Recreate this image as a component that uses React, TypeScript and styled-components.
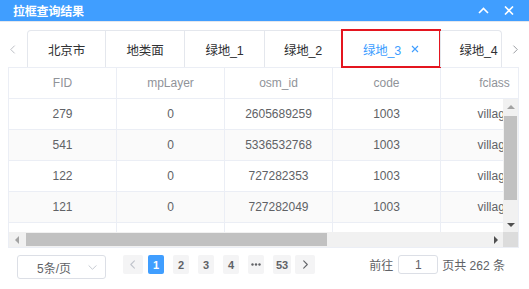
import React from "react";
import styled, { createGlobalStyle } from "styled-components";

const GlobalStyle = createGlobalStyle`
  html, body {
    margin: 0;
    background: #ffffff;
    font-family: "Liberation Sans", "Noto Sans CJK SC", sans-serif;
  }
  * { box-sizing: border-box; }
`;

const tabs = [
  { name: "北京市", width: 77 },
  { name: "地类面", width: 79 },
  { name: "绿地_1", width: 80 },
  { name: "绿地_2", width: 77 },
  { name: "绿地_3", width: 99 },
  { name: "绿地_4", width: 76 },
];
const activeTab = 4;

const columns = ["FID", "mpLayer", "osm_id", "code", "fclass"];
const rows = [
  ["279", "0", "2605689259", "1003", "village"],
  ["541", "0", "5336532768", "1003", "village"],
  ["122", "0", "727282353", "1003", "village"],
  ["121", "0", "727282049", "1003", "village"],
  ["120", "0", "727281977", "1003", "village"],
];

const Chevron = ({ dir, color, size = 8, width = 1.3 }: { dir: "up" | "down" | "left" | "right"; color: string; size?: number; width?: number }) => {
  const d = {
    up: "M1 6 L5 2 L9 6",
    down: "M1 3 L5 7 L9 3",
    left: "M6 1 L2 5 L6 9",
    right: "M3 1 L7 5 L3 9",
  }[dir];
  return (
    <svg width={size} height={size} viewBox="0 0 10 10">
      <path d={d} fill="none" stroke={color} strokeWidth={width} strokeLinecap="round" strokeLinejoin="round" />
    </svg>
  );
};

const Tri = ({ dir, color }: { dir: "up" | "down" | "left" | "right"; color: string }) => {
  const p = {
    up: "0,6 4,2 8,6",
    down: "0,2 4,6 8,2",
    left: "6,0 2,4 6,8",
    right: "2,0 6,4 2,8",
  }[dir];
  return (
    <svg width="8" height="8" viewBox="0 0 8 8">
      <polygon points={p} fill={color} />
    </svg>
  );
};

const App = () => {
  return (
    <Panel>
      <GlobalStyle />
      <TitleBar>
        <Title>拉框查询结果</Title>
        <TitleTools>
          <svg width="11" height="7" viewBox="0 0 11 7">
            <path d="M1 6 L5.5 1.5 L10 6" fill="none" stroke="#fff" strokeWidth="1.6" />
          </svg>
          <svg width="10" height="9" viewBox="0 0 10 9">
            <path d="M1 0.5 L9 8.5 M9 0.5 L1 8.5" fill="none" stroke="#fff" strokeWidth="1.6" />
          </svg>
        </TitleTools>
      </TitleBar>

      <TabsBar>
        <NavArrow>
          <Chevron dir="left" color="#b4b7bd" size={9} width={1} />
        </NavArrow>
        <TabNav>
          {tabs.map((t, i) => (
            <Tab key={t.name} $w={t.width} $active={i === activeTab} $first={i === 0}>
              {t.name}
              {i === activeTab && (
                <svg width="8" height="8" viewBox="0 0 8 8">
                  <path d="M1 1 L7 7 M7 1 L1 7" stroke="#409eff" strokeWidth="1.1" />
                </svg>
              )}
            </Tab>
          ))}
        </TabNav>
        <NavArrow>
          <Chevron dir="right" color="#909399" size={9} width={1} />
        </NavArrow>
      </TabsBar>

      <Table>
        <HeadRow>
          {columns.map((c) => (
            <HeadCell key={c}>{c}</HeadCell>
          ))}
        </HeadRow>
        <BodyGrid>
          <BodyView>
            {rows.map((r, ri) => (
              <Row key={ri} $striped={ri % 2 === 1}>
                {r.map((v, ci) => (
                  <Cell key={ci}>{v}</Cell>
                ))}
              </Row>
            ))}
          </BodyView>
          <VScroll>
            <ScrollBtn><Tri dir="up" color="#a3a3a3" /></ScrollBtn>
            <VTrack>
              <VThumb />
            </VTrack>
            <ScrollBtn><Tri dir="down" color="#505050" /></ScrollBtn>
          </VScroll>
          <HScroll>
            <ScrollBtn><Tri dir="left" color="#a3a3a3" /></ScrollBtn>
            <HTrack>
              <HThumb />
            </HTrack>
            <ScrollBtn><Tri dir="right" color="#505050" /></ScrollBtn>
          </HScroll>
          <Corner />
        </BodyGrid>
      </Table>

      <Pager>
        <SizeSelect>
          <span>5条/页</span>
          <Chevron dir="down" color="#c0c4cc" size={9} width={1} />
        </SizeSelect>
        <NavBtn>
          <Chevron dir="left" color="#c0c4cc" size={9} width={1.2} />
        </NavBtn>
        <Pages>
          <PageBtn $active>1</PageBtn>
          <PageBtn>2</PageBtn>
          <PageBtn>3</PageBtn>
          <PageBtn>4</PageBtn>
          <PageBtn>
            <svg width="10" height="3" viewBox="0 0 10 3">
              <circle cx="1.5" cy="1.5" r="1.2" fill="#606266" />
              <circle cx="5" cy="1.5" r="1.2" fill="#606266" />
              <circle cx="8.5" cy="1.5" r="1.2" fill="#606266" />
            </svg>
          </PageBtn>
          <PageBtn>53</PageBtn>
        </Pages>
        <NavBtn>
          <Chevron dir="right" color="#606266" size={9} width={1.2} />
        </NavBtn>
        <Jump>
          前往
          <JumpInput>1</JumpInput>
          页共 262 条
        </Jump>
      </Pager>
    </Panel>
  );
};

export default App;

const Panel = styled.div`
  width: 529px;
  height: 289px;
  background: #ffffff;
  overflow: hidden;
`;

const TitleBar = styled.div`
  height: 22px;
  background: #409eff;
  border-bottom: 1px solid #e4e7ed;
  display: flex;
  align-items: center;
  justify-content: space-between;
  padding: 0 15px 0 13px;
`;

const Title = styled.div`
  color: #ffffff;
  font-size: 12px;
  font-weight: bold;
  letter-spacing: -0.2px;
`;

const TitleTools = styled.div`
  display: flex;
  align-items: center;
  gap: 15px;
`;

const TabsBar = styled.div`
  margin-top: 8px;
  height: 37px;
  display: flex;
`;

const NavArrow = styled.div`
  width: 27px;
  flex-shrink: 0;
  display: flex;
  align-items: center;
  justify-content: center;
  padding-top: 1px;
`;

const TabNav = styled.div`
  flex: 1;
  min-width: 0;
  display: flex;
  border: 1px solid #e4e7ed;
  border-bottom: none;
  border-radius: 4px 4px 0 0;
  overflow-x: clip;
  overflow-y: visible;
`;

const Tab = styled.div<{ $w: number; $active?: boolean; $first?: boolean }>`
  position: relative;
  flex-shrink: 0;
  width: ${(p) => p.$w}px;
  display: flex;
  align-items: center;
  justify-content: center;
  gap: 10px;
  border-left: ${(p) => (p.$first ? "none" : "1px solid #e4e7ed")};
  font-size: 12.5px;
  letter-spacing: -0.2px;
  white-space: nowrap;
  color: ${(p) => (p.$active ? "#409eff" : "#303133")};
  &::after {
    content: "";
    display: ${(p) => (p.$active ? "block" : "none")};
    position: absolute;
    left: -1px;
    right: -1px;
    top: -2px;
    bottom: -1px;
    border: 2px solid #e4151f;
  }
`;

const Table = styled.div`
  margin: 0 10px 0 8px;
  border: 1px solid #ebeef5;
  overflow: hidden;
`;

const HeadRow = styled.div`
  display: flex;
  height: 31px;
  border-bottom: 1px solid #ebeef5;
`;

const HeadCell = styled.div`
  flex-shrink: 0;
  width: 108px;
  border-right: 1px solid #ebeef5;
  display: flex;
  align-items: center;
  justify-content: center;
  font-size: 12px;
  color: #909399;
`;

const BodyGrid = styled.div`
  display: grid;
  grid-template-columns: 1fr 15px;
  grid-template-rows: 133px 15px;
`;

const BodyView = styled.div`
  overflow: hidden;
`;

const Row = styled.div<{ $striped?: boolean }>`
  display: flex;
  height: 31px;
  border-bottom: 1px solid #ebeef5;
  background: ${(p) => (p.$striped ? "#fafafa" : "#ffffff")};
`;

const Cell = styled.div`
  flex-shrink: 0;
  width: 108px;
  border-right: 1px solid #ebeef5;
  display: flex;
  align-items: center;
  justify-content: center;
  font-size: 12px;
  color: #606266;
`;

const VScroll = styled.div`
  display: flex;
  flex-direction: column;
  background: #f1f1f1;
`;

const ScrollBtn = styled.div`
  width: 15px;
  height: 15px;
  flex-shrink: 0;
  display: flex;
  align-items: center;
  justify-content: center;
`;

const VTrack = styled.div`
  flex: 1;
  padding: 2px 1px 0;
`;

const VThumb = styled.div`
  height: 84px;
  background: #c1c1c1;
`;

const HScroll = styled.div`
  display: flex;
  background: #f1f1f1;
`;

const HTrack = styled.div`
  flex: 1;
  padding: 1px 0 1px 2px;
`;

const HThumb = styled.div`
  width: 301px;
  height: 100%;
  background: #c1c1c1;
`;

const Corner = styled.div`
  background: #dcdcdc;
`;

const Pager = styled.div`
  margin-top: 7px;
  padding-left: 17px;
  display: flex;
  align-items: flex-start;
  font-size: 12px;
  color: #606266;
`;

const SizeSelect = styled.div`
  width: 89px;
  height: 24px;
  border: 1px solid #dcdfe6;
  border-radius: 3px;
  display: flex;
  align-items: center;
  justify-content: space-between;
  padding: 0 8px 0 19px;
  margin-right: 17px;
  font-size: 12px;
  color: #606266;
`;

const NavBtn = styled.div`
  width: 20px;
  height: 19px;
  border-radius: 2px;
  background: #f4f4f5;
  display: flex;
  align-items: center;
  justify-content: center;
`;

const Pages = styled.div`
  display: flex;
  gap: 9px;
  margin: 0 4px 0 5px;
`;

const PageBtn = styled.div<{ $active?: boolean }>`
  min-width: 16px;
  height: 19px;
  padding: 0 3px;
  border-radius: 2px;
  display: flex;
  align-items: center;
  justify-content: center;
  font-size: 11px;
  font-weight: bold;
  background: ${(p) => (p.$active ? "#409eff" : "#f4f4f5")};
  color: ${(p) => (p.$active ? "#ffffff" : "#606266")};
`;

const Jump = styled.div`
  margin-left: 54px;
  height: 19px;
  display: flex;
  align-items: center;
  font-size: 12px;
  color: #606266;
`;

const JumpInput = styled.div`
  width: 40px;
  height: 19px;
  margin: 0 4px 0 5px;
  border: 1px solid #dcdfe6;
  border-radius: 3px;
  display: flex;
  align-items: center;
  justify-content: center;
  font-size: 12px;
  color: #606266;
`;
